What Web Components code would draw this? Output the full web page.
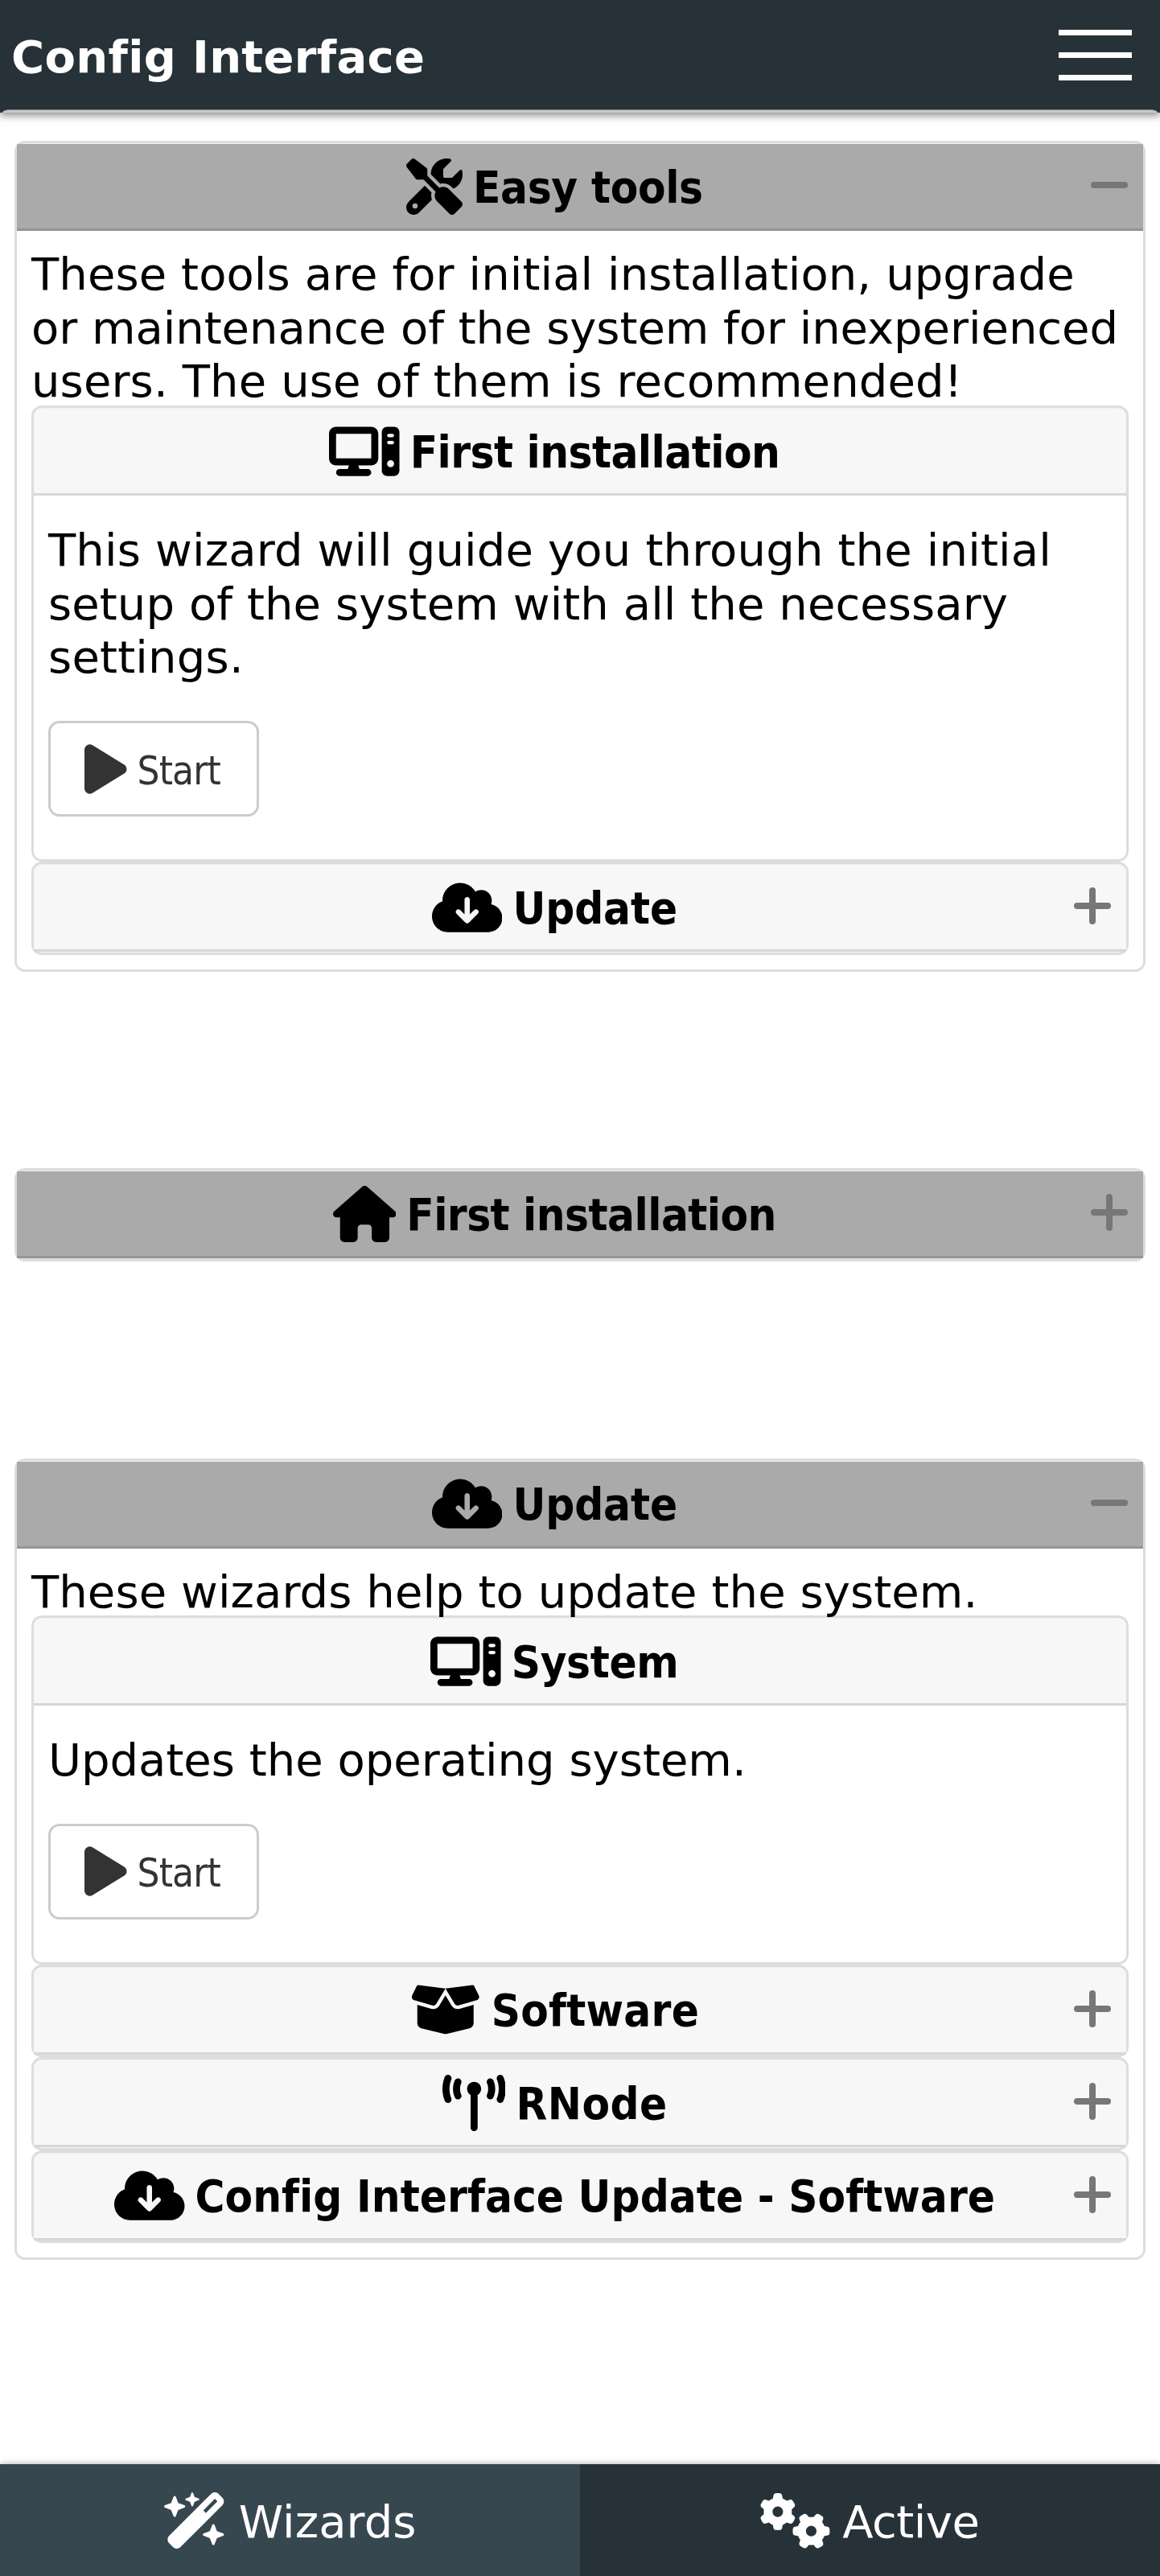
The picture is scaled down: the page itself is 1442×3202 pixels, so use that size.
<!DOCTYPE html>
<html lang="en">
<head>
<meta charset="utf-8">
<title>Config Interface</title>
<style>
body{margin:0;background:#fff;color:#000;font-family:"DejaVu Sans",Verdana,sans-serif;font-size:56px}
</style>
</head>
<body>
<config-app></config-app>
<script>
const ICONS={
tools:[512,'M78.6 5C69.1-2.4 55.6-1.5 47 7L7 47c-8.5 8.5-9.4 22-2.1 31.6l80 104c4.5 5.9 11.6 9.4 19 9.4h54.1l109 109c-14.7 29-10 65.4 14.3 89.6l112 112c12.5 12.5 32.8 12.5 45.3 0l64-64c12.5-12.5 12.5-32.8 0-45.3l-112-112c-24.2-24.2-60.6-29-89.6-14.3l-109-109V104c0-7.5-3.5-14.5-9.4-19L78.6 5zM19.9 396.1C7.2 408.8 0 426.1 0 444.1C0 481.6 30.4 512 67.9 512c18 0 35.3-7.2 48-19.9L233.7 374.3c-7.8-20.9-9-43.6-3.6-65.1l-61.7-61.7L19.9 396.1zM512 144c0-10.5-1.1-20.7-3.2-30.5c-2.4-11.2-16.1-14.1-24.2-6l-63.9 63.9c-3 3-7.1 4.7-11.3 4.7H352c-8.8 0-16-7.2-16-16V102.6c0-4.2 1.7-8.3 4.7-11.3l63.9-63.9c8.1-8.1 5.2-21.8-6-24.2C388.7 1.1 378.5 0 368 0C288.5 0 224 64.5 224 144l0 .8 85.3 85.3c36-9.1 75.8 .5 104 28.7L429 274.5c49-23 83-72.8 83-130.5zM56 432a24 24 0 1 1 48 0 24 24 0 1 1 -48 0z'],
computer:[640,'M384 96V320H64L64 96H384zM64 32C28.7 32 0 60.7 0 96V320c0 35.3 28.7 64 64 64H181.3l-10.7 32H96c-17.7 0-32 14.3-32 32s14.3 32 32 32H352c17.7 0 32-14.3 32-32s-14.3-32-32-32H277.3l-10.7-32H384c35.3 0 64-28.7 64-64V96c0-35.3-28.7-64-64-64H64zm464 0c-26.5 0-48 21.5-48 48V432c0 26.5 21.5 48 48 48h64c26.5 0 48-21.5 48-48V80c0-26.5-21.5-48-48-48H528zm16 64h32c8.8 0 16 7.2 16 16s-7.2 16-16 16H544c-8.8 0-16-7.2-16-16s7.2-16 16-16zm-16 80c0-8.8 7.2-16 16-16h32c8.8 0 16 7.2 16 16s-7.2 16-16 16H544c-8.8 0-16-7.2-16-16zm32 224a32 32 0 1 1 0-64 32 32 0 1 1 0 64z'],
cloud:[640,'M144 480C64.5 480 0 415.5 0 336c0-62.8 40.2-116.2 96.2-135.9c-.1-2.7-.2-5.4-.2-8.1c0-88.4 71.6-160 160-160c59.3 0 111 32.2 138.7 80.2C409.9 102 428.3 96 448 96c53 0 96 43 96 96c0 12.2-2.3 23.8-6.4 34.6C596 238.4 640 290.1 640 352c0 70.7-57.3 128-128 128H144zm79-167l80 80c9.4 9.4 24.6 9.4 33.9 0l80-80c9.4-9.4 9.4-24.6 0-33.9s-24.6-9.4-33.9 0l-39 39V184c0-13.3-10.7-24-24-24s-24 10.7-24 24V318.1l-39-39c-9.4-9.4-24.6-9.4-33.9 0s-9.4 24.6 0 33.9z'],
house:[576,'M575.8 255.5c0 18-15 32.1-32 32.1h-32l.7 160.2c0 2.7-.2 5.4-.5 8.1V472c0 22.1-17.9 40-40 40H456c-1.1 0-2.2 0-3.3-.1c-1.4 .1-2.8 .1-4.2 .1H416 392c-22.1 0-40-17.9-40-40V448 384c0-17.7-14.3-32-32-32H256c-17.7 0-32 14.3-32 32v64 24c0 22.1-17.9 40-40 40H160 128.1c-1.5 0-3-.1-4.5-.2c-1.2 .1-2.4 .2-3.6 .2H104c-22.1 0-40-17.9-40-40V360c0-.9 0-1.9 .1-2.8V287.6H32c-18 0-32-14-32-32.1c0-9 3-17 10-24L266.4 8c7-7 15-8 22-8s15 2 21 7L564.8 231.5c8 7 12 15 11 24z'],
box:[640,'M58.9 42.1c3-6.1 9.6-9.6 16.3-8.7L320 64 564.8 33.4c6.7-.8 13.3 2.7 16.3 8.7l41.7 83.4c9 17.9-.6 39.6-19.8 45.1L439.6 217.3c-13.9 4-28.8-1.9-36.2-14.3L320 64 236.6 203c-7.4 12.4-22.3 18.3-36.2 14.3L37.1 170.6c-19.3-5.5-28.8-27.2-19.8-45.1L58.9 42.1zM321.1 128l54.9 91.4c14.9 24.8 44.6 36.6 72.5 28.6L576 211.6v167c0 22-15 41.2-36.4 46.6l-204.1 51c-10.2 2.6-20.9 2.6-31 0l-204.1-51C79 419.7 64 400.5 64 378.5v-167L191.6 248c27.8 8 57.6-3.8 72.5-28.6L318.9 128h2.2z'],
tower:[576,'M80.3 44C69.8 69.9 64 98.2 64 128s5.8 58.1 16.3 84c6.6 16.4-1.3 35-17.7 41.7s-35-1.3-41.7-17.7C7.4 202.6 0 166.1 0 128S7.4 53.4 20.9 20C27.6 3.6 46.2-4.3 62.6 2.3S86.9 27.6 80.3 44zM555.1 20C568.6 53.4 576 89.9 576 128s-7.4 74.6-20.9 108c-6.6 16.4-25.3 24.3-41.7 17.7S489.1 228.4 495.7 212c10.5-25.9 16.3-54.2 16.3-84s-5.8-58.1-16.3-84C489.1 27.6 497 9 513.4 2.3s35 1.3 41.7 17.7zM352 128c0 23.7-12.9 44.4-32 55.4V480c0 17.7-14.3 32-32 32s-32-14.3-32-32V183.4c-19.1-11.1-32-31.7-32-55.4c0-35.3 28.7-64 64-64s64 28.7 64 64zM170.6 76.8C163.8 92.4 160 109.7 160 128s3.8 35.6 10.6 51.2c7.1 16.2-.3 35.1-16.5 42.1s-35.1-.3-42.1-16.5c-10.3-23.6-16-49.6-16-76.8s5.7-53.2 16-76.8c7.1-16.2 25.9-23.6 42.1-16.5s23.6 25.9 16.5 42.1zM464 51.2c10.3 23.6 16 49.6 16 76.8s-5.7 53.2-16 76.8c-7.1 16.2-25.9 23.6-42.1 16.5s-23.6-25.9-16.5-42.1c6.8-15.6 10.6-32.9 10.6-51.2s-3.8-35.6-10.6-51.2c-7.1-16.2 .3-35.1 16.5-42.1s35.1 .3 42.1 16.5z'],
play:[384,'M73 39c-14.8-9.1-33.4-9.4-48.5-.9S0 62.6 0 80V432c0 17.4 9.4 33.4 24.5 41.9s33.7 8.1 48.5-.9L361 297c14.3-8.7 23-24.2 23-41s-8.7-32.2-23-41L73 39z'],
wand:[576,'M234.7 42.7L197 56.8c-3 1.1-5 4-5 7.2s2 6.1 5 7.2l37.7 14.1L248.8 123c1.1 3 4 5 7.2 5s6.1-2 7.2-5l14.1-37.7L315 71.2c3-1.1 5-4 5-7.2s-2-6.1-5-7.2L277.3 42.7 263.2 5c-1.1-3-4-5-7.2-5s-6.1 2-7.2 5L234.7 42.7zM46.1 395.4c-18.7 18.7-18.7 49.1 0 67.9l34.6 34.6c18.7 18.7 49.1 18.7 67.9 0L529.9 116.5c18.7-18.7 18.7-49.1 0-67.9L495.3 14.1c-18.7-18.7-49.1-18.7-67.9 0L46.1 395.4zM484.6 82.6l-105 105-23.3-23.3 105-105 23.3 23.3zM7.5 117.2C3 118.9 0 123.2 0 128s3 9.1 7.5 10.8L64 160l21.2 56.5c1.7 4.5 6 7.5 10.8 7.5s9.1-3 10.8-7.5L128 160l56.5-21.2c4.5-1.7 7.5-6 7.5-10.8s-3-9.1-7.5-10.8L128 96 106.8 39.5C105.1 35 100.8 32 96 32s-9.1 3-10.8 7.5L64 96 7.5 117.2zm352 256c-4.5 1.7-7.5 6-7.5 10.8s3 9.1 7.5 10.8L416 416l21.2 56.5c1.7 4.5 6 7.5 10.8 7.5s9.1-3 10.8-7.5L480 416l56.5-21.2c4.5-1.7 7.5-6 7.5-10.8s-3-9.1-7.5-10.8L480 352l-21.2-56.5c-1.7-4.5-6-7.5-10.8-7.5s-9.1 3-10.8 7.5L416 352l-56.5 21.2z'],
gears:[640,'M308.5 135.3c7.1-6.3 9.9-16.2 6.2-25c-2.3-5.3-4.8-10.5-7.6-15.5L304 89.4c-3-5-6.3-9.9-9.8-14.6c-5.7-7.6-15.7-10.1-24.7-7.1l-28.2 9.3c-10.7-8.8-23-16-36.2-20.9L199 27.1c-1.9-9.3-9.1-16.7-18.5-17.8C173.9 8.4 167.2 8 160.4 8h-.7c-6.8 0-13.5 .4-20.1 1.2c-9.4 1.1-16.6 8.6-18.5 17.8L115 56.1c-13.3 5-25.5 12.1-36.2 20.9L50.5 67.8c-9-3-19-.5-24.7 7.1c-3.5 4.7-6.8 9.6-9.9 14.6l-3 5.3c-2.8 5-5.3 10.2-7.6 15.6c-3.7 8.7-.9 18.6 6.2 25l22.2 19.8C32.6 161.9 32 168.9 32 176s.6 14.1 1.7 20.9L11.5 216.7c-7.1 6.3-9.9 16.2-6.2 25c2.3 5.3 4.8 10.5 7.6 15.6l3 5.2c3 5.1 6.3 9.9 9.9 14.6c5.7 7.6 15.7 10.1 24.7 7.1l28.2-9.3c10.7 8.8 23 16 36.2 20.9l6.1 29.1c1.9 9.3 9.1 16.7 18.5 17.8c6.7 .8 13.5 1.2 20.4 1.2s13.7-.4 20.4-1.2c9.4-1.1 16.6-8.6 18.5-17.8l6.1-29.1c13.3-5 25.5-12.1 36.2-20.9l28.2 9.3c9 3 19 .5 24.7-7.1c3.5-4.7 6.8-9.5 9.8-14.6l3.1-5.4c2.8-5 5.3-10.2 7.6-15.5c3.7-8.7 .9-18.6-6.2-25l-22.2-19.8c1.1-6.8 1.7-13.8 1.7-20.9s-.6-14.1-1.7-20.9l22.2-19.8zM112 176a48 48 0 1 1 96 0 48 48 0 1 1 -96 0zM504.7 500.5c6.3 7.1 16.2 9.9 25 6.2c5.3-2.3 10.5-4.8 15.5-7.6l5.4-3.1c5-3 9.9-6.3 14.6-9.8c7.6-5.7 10.1-15.7 7.1-24.7l-9.3-28.2c8.8-10.7 16-23 20.9-36.2l29.1-6.1c9.3-1.9 16.7-9.1 17.8-18.5c.8-6.7 1.2-13.5 1.2-20.4s-.4-13.7-1.2-20.4c-1.1-9.4-8.6-16.6-17.8-18.5L583.9 307c-5-13.3-12.1-25.5-20.9-36.2l9.3-28.2c3-9 .5-19-7.1-24.7c-4.7-3.5-9.6-6.8-14.6-9.9l-5.3-3c-5-2.8-10.2-5.3-15.6-7.6c-8.7-3.7-18.6-.9-25 6.2l-19.8 22.2c-6.8-1.1-13.8-1.7-20.9-1.7s-14.1 .6-20.9 1.7l-19.8-22.2c-6.3-7.1-16.2-9.9-25-6.2c-5.3 2.3-10.5 4.8-15.6 7.6l-5.2 3c-5.1 3-9.9 6.3-14.6 9.9c-7.6 5.7-10.1 15.7-7.1 24.7l9.3 28.2c-8.8 10.7-16 23-20.9 36.2L315.1 313c-9.3 1.9-16.7 9.1-17.8 18.5c-.8 6.7-1.2 13.5-1.2 20.4s.4 13.7 1.2 20.4c1.1 9.4 8.6 16.6 17.8 18.5l29.1 6.1c5 13.3 12.1 25.5 20.9 36.2l-9.3 28.2c-3 9-.5 19 7.1 24.7c4.7 3.5 9.5 6.8 14.6 9.8l5.4 3.1c5 2.8 10.2 5.3 15.5 7.6c8.7 3.7 18.6 .9 25-6.2l19.8-22.2c6.8 1.1 13.8 1.7 20.9 1.7s14.1-.6 20.9-1.7l19.8 22.2zM464 304a48 48 0 1 1 0 96 48 48 0 1 1 0-96z']
};
function define(name,html,setup){
  customElements.define(name,class extends HTMLElement{
    connectedCallback(){
      if(this.shadowRoot)return;
      this.attachShadow({mode:'open'}).innerHTML=html;
      if(setup)setup(this,this.shadowRoot);
    }
  });
}
define('ui-icon','<style>:host{display:block;flex:none;height:70px}svg{display:block;height:70px;fill:currentColor}</style><svg aria-hidden="true"><path/></svg>',(el,r)=>{
  const [w,d]=ICONS[el.getAttribute('name')];
  const s=r.querySelector('svg');s.setAttribute('viewBox','0 0 '+w+' 512');s.style.width=w*70/512+'px';s.firstChild.setAttribute('d',d);
});
// One unwrapped line of text; "track" is its letter spacing in pixels.
define('text-line','<style>:host{display:block;white-space:nowrap;letter-spacing:var(--track,0);margin-right:calc(-1*var(--track,0px))}:host([narrow]){font-stretch:condensed}</style><slot></slot>',el=>{
  el.style.setProperty('--track',(el.getAttribute('track')||0)+'px');
});
define('app-header',`<style>
:host{display:block;position:relative;height:140px;background:#273238;color:#fff;box-shadow:0 3px 10px rgba(0,0,0,.5)}
.bar{display:flex;justify-content:space-between;align-items:center;height:136px;padding:0 35px 0 14px}
.name{font-weight:700;line-height:66px;padding-top:6px}
.menu{display:flex;flex-direction:column;gap:21px;width:91px;padding-top:1px}
.menu i{height:7px;background:#fff}
.edge{position:absolute;left:3px;right:3px;bottom:0;height:4px;box-sizing:border-box;border-top:1px solid #858688;background:#c8c8c8;border-radius:9px 9px 0 0/4px 4px 0 0}
</style><div class="bar"><div class="name"><slot></slot></div><div class="menu"><i></i><i></i><i></i></div></div><div class="edge"></div>`);
define('fold-panel',`<style>
:host{display:block;box-sizing:border-box;border:3px solid #ddd;border-radius:13px;padding-top:1px;box-shadow:inset 0 1px #efefef}
:host([level="1"]){margin:0 18px}
:host([level="1"]:not([open])){height:116px;background:#ddd}
:host([level="2"]){background:#f7f7f7}
:host([level="2"]:not([open])){height:115.5px}
.head{position:relative;display:flex;align-items:center;justify-content:center;gap:13px;height:108px;box-sizing:border-box;padding:0 63px 0 0;border-bottom:3px solid #d7d7d7;font-weight:700;background:#f7f7f7;line-height:66px}
:host([level="2"]) .head{border-top-left-radius:9px;border-top-right-radius:9px}
:host([level="1"]) .head{background:#aaa;border-bottom-color:#959595}
.label{padding-top:2px}
.sign{display:grid;place-items:center;position:absolute;right:19px;top:28px;width:46px;height:46px}
.sign i{grid-area:1/1;background:#777;border-radius:4px}
.sign .h{width:46px;height:8px}.sign .v{width:8px;height:46px}
:host([sign="-"]) .v,:host(:not([sign])) .sign{display:none}
.body{background:#fff;border-radius:0 0 10px 10px}
:host(:not([open])) .body{display:none}
:host([level="1"]) .body{padding:17px 18px 18px}
:host([level="2"]) .body{padding:31px 18px 53px}
</style><div class="head"><slot name="icon"></slot><span class="label"><slot name="title"></slot></span><span class="sign"><i class="h"></i><i class="v"></i></span></div><div class="body"><slot></slot></div>`);
define('text-block','<style>:host{display:block;line-height:66.67px;padding-top:4px;margin-bottom:-4px}</style><slot></slot>');
define('start-button',`<style>
:host{display:flex;align-items:center;gap:13px;box-sizing:border-box;width:262px;height:119px;margin-top:49px;border:3px solid #ccc;border-radius:14px;padding-left:42px;color:#333;font-size:49px;line-height:60px;background:#fff}
span{padding-top:6px}
</style><ui-icon name="play"></ui-icon><span><slot></slot></span>`);
define('nav-tab',`<style>
:host{display:flex;flex:1;align-items:center;justify-content:center;gap:14.5px;height:139px;background:#273238;color:#fff;line-height:66px;box-sizing:border-box}
:host([active]){background:#37474f}
span{padding-top:4px}
</style><slot name="icon"></slot><span><slot></slot></span>`);
define('tab-bar','<style>:host{display:flex;margin-top:auto;box-shadow:0 0 8px rgba(0,0,0,.35)}</style><slot></slot>');
define('config-app',`<style>
:host{display:flex;flex-direction:column;height:3202px}
main{display:flex;flex-direction:column;gap:244.5px;padding-top:35px}
</style>
<app-header><text-line track=".34">Config Interface</text-line></app-header>
<main>
<fold-panel level="1" open sign="-"><ui-icon slot="icon" name="tools"></ui-icon><text-line slot="title" narrow track="-.37">Easy tools</text-line>
<text-block><text-line track=".09">These tools are for initial installation, upgrade</text-line><text-line track="-.05">or maintenance of the system for inexperienced</text-line><text-line track=".12">users. The use of them is recommended!</text-line></text-block>
<fold-panel level="2" open><ui-icon slot="icon" name="computer"></ui-icon><text-line slot="title" narrow track="-.56">First installation</text-line>
<text-block><text-line track=".16">This wizard will guide you through the initial</text-line><text-line track=".08">setup of the system with all the necessary</text-line><text-line track=".2">settings.</text-line></text-block>
<start-button><text-line narrow track="-.85">Start</text-line></start-button></fold-panel>
<fold-panel level="2" sign="+"><ui-icon slot="icon" name="cloud"></ui-icon><text-line slot="title" narrow track="-.12">Update</text-line></fold-panel>
</fold-panel>
<fold-panel level="1" sign="+"><ui-icon slot="icon" name="house"></ui-icon><text-line slot="title" narrow track="-.56">First installation</text-line></fold-panel>
<fold-panel level="1" open sign="-"><ui-icon slot="icon" name="cloud"></ui-icon><text-line slot="title" narrow track="-.12">Update</text-line>
<text-block><text-line track=".08">These wizards help to update the system.</text-line></text-block>
<fold-panel level="2" open><ui-icon slot="icon" name="computer"></ui-icon><text-line slot="title" narrow track="-.38">System</text-line>
<text-block><text-line track="0">Updates the operating system.</text-line></text-block>
<start-button><text-line narrow track="-.85">Start</text-line></start-button></fold-panel>
<fold-panel level="2" sign="+"><ui-icon slot="icon" name="box"></ui-icon><text-line slot="title" narrow track=".25">Software</text-line></fold-panel>
<fold-panel level="2" sign="+"><ui-icon slot="icon" name="tower"></ui-icon><text-line slot="title" narrow track=".5">RNode</text-line></fold-panel>
<fold-panel level="2" sign="+"><ui-icon slot="icon" name="cloud"></ui-icon><text-line slot="title" narrow track=".04">Config Interface Update - Software</text-line></fold-panel>
</fold-panel>
</main>
<tab-bar><nav-tab active><ui-icon slot="icon" name="wand"></ui-icon><text-line track=".08">Wizards</text-line></nav-tab><nav-tab><ui-icon slot="icon" name="gears"></ui-icon><text-line track="-.5">Active</text-line></nav-tab></tab-bar>`);
</script>
</body>
</html>
